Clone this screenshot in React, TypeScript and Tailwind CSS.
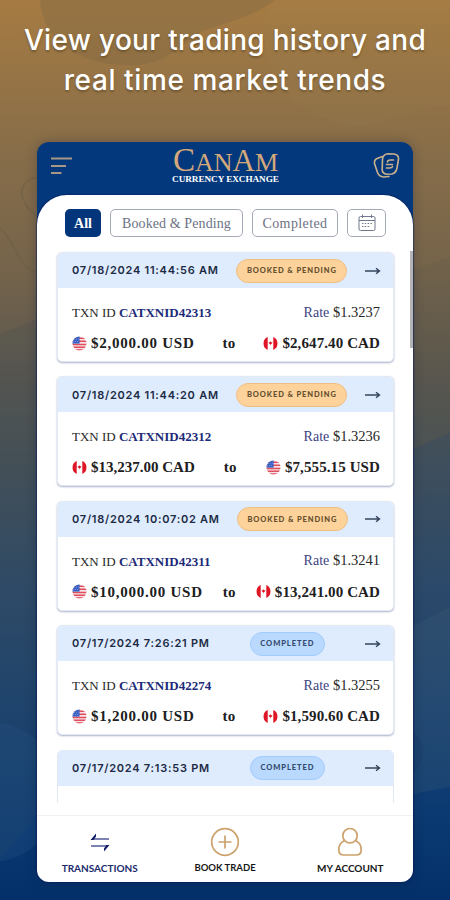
type Currency = "USD" | "CAD";

type Transaction = {
  date: string;
  status: "BOOKED & PENDING" | "COMPLETED";
  id: string;
  rate: string;
  from: string;
  fromCurrency: Currency;
  to: string;
  toCurrency: Currency;
};

const transactions: Transaction[] = [
  { date: "07/18/2024 11:44:56 AM", status: "BOOKED & PENDING", id: "CATXNID42313", rate: "$1.3237", from: "$2,000.00", fromCurrency: "USD", to: "$2,647.40", toCurrency: "CAD" },
  { date: "07/18/2024 11:44:20 AM", status: "BOOKED & PENDING", id: "CATXNID42312", rate: "$1.3236", from: "$13,237.00", fromCurrency: "CAD", to: "$7,555.15", toCurrency: "USD" },
  { date: "07/18/2024 10:07:02 AM", status: "BOOKED & PENDING", id: "CATXNID42311", rate: "$1.3241", from: "$10,000.00", fromCurrency: "USD", to: "$13,241.00", toCurrency: "CAD" },
  { date: "07/17/2024 7:26:21 PM", status: "COMPLETED", id: "CATXNID42274", rate: "$1.3255", from: "$1,200.00", fromCurrency: "USD", to: "$1,590.60", toCurrency: "CAD" },
];

function Flag({ currency }: { currency: Currency }) {
  if (currency === "CAD") {
    return (
      <svg width="15" height="15" viewBox="0 0 15 15" className="shrink-0">
        <circle cx="7.5" cy="7.5" r="7" fill="#fff" />
        <path d="M4.7 1.1a7 7 0 0 0 0 12.8zM10.3 1.1a7 7 0 0 1 0 12.8z" fill="#df1525" />
        <path d="M7.5 5.2l.7 1 1.4.3-.9 1.2-.8.4-.2 1.2h-.4l-.2-1.2-.8-.4-.9-1.2 1.4-.3z" fill="#df1525" />
      </svg>
    );
  }
  return (
    <svg width="15" height="15" viewBox="0 0 15 15" className="shrink-0">
      <clipPath id="round">
        <circle cx="7.5" cy="7.5" r="7" />
      </clipPath>
      <g clipPath="url(#round)">
        <rect width="15" height="15" fill="#f6e2e8" />
        <path d="M0 2.2h15M0 5.3h15M0 8.4h15M0 11.2h15M0 14h15" stroke="#e04f5c" strokeWidth="1.5" />
        <rect width="7.6" height="7.6" fill="#3a62c5" />
        <path d="M2 3.2h5M1 5.5h6" stroke="#8ba5dc" strokeWidth=".7" strokeDasharray="1 1" />
      </g>
    </svg>
  );
}

function Backdrop() {
  return (
    <svg width="450" height="900" viewBox="0 0 450 900" className="absolute inset-0">
      <defs>
        <linearGradient id="sky" x1="0" y1="0" x2="0" y2="1">
          <stop offset="0" stopColor="#a67b42" />
          <stop offset=".16" stopColor="#896e49" />
          <stop offset=".3" stopColor="#75644b" />
          <stop offset=".42" stopColor="#5a5750" />
          <stop offset=".52" stopColor="#465158" />
          <stop offset=".64" stopColor="#314c68" />
          <stop offset=".78" stopColor="#1d4470" />
          <stop offset=".9" stopColor="#0b3a72" />
          <stop offset="1" stopColor="#04306a" />
        </linearGradient>
      </defs>
      <rect width="450" height="900" fill="url(#sky)" />
      <path d="M40 0h235c-20 16-48 22-70 30-20 9-38 38-78 35C80 66 42 40 40 0z" fill="#806a43" fillOpacity=".4" />
      <path d="M270 0c-22 66 18 118 90 127 28-5 60-22 90-22V0z" fill="#a08454" fillOpacity=".12" />
      <path d="M38 177c-15 2-20 15-13 26 4 8 8 10 12 13M0 228c14 12 20 43 37 44" fill="none" stroke="#635a46" strokeOpacity=".3" strokeWidth="2" />
      <path d="M0 334l100-40v446L0 860z" fill="#334a58" fillOpacity=".14" />
      <path d="M413 270l37-13v176l-37 16z" fill="#565548" fillOpacity=".13" />
      <path d="M413 449l37-16v174l-37 19z" fill="#1d4570" fillOpacity=".18" />
      <path d="M413 626l37-19v180l-37 7z" fill="#3c5a79" fillOpacity=".25" />
      <circle cx="-10" cy="792" r="70" fill="#2d5986" fillOpacity=".25" />
      <circle cx="396" cy="752" r="27" fill="#173b66" fillOpacity=".4" />
    </svg>
  );
}

function AppHeader() {
  return (
    <div className="flex h-[53px] items-start justify-between pr-[13px] pl-[14px]">
      <svg width="22" height="20" viewBox="0 0 22 20" className="mt-[14px]" stroke="#a99786" strokeWidth="2">
        <path d="M0 2.5h21M0 10h15M0 17h10.5" />
      </svg>
      <div className="mt-[7px] ml-[5px] flex flex-col items-center whitespace-nowrap">
        <div className="h-[26px] text-[26px] leading-[22px] text-[#d3a87b]">
          <span className="text-[33px] leading-[22px]">C</span>AN<span className="text-[31px] leading-[22px]">A</span>M
        </div>
        <div className="text-[9.2px] leading-[8px] font-bold tracking-[-0.05px] text-white">CURRENCY EXCHANGE</div>
      </div>
      <svg width="27" height="27" viewBox="0 0 27 27" className="mt-[10px]" fill="none" stroke="#cbb08d" strokeWidth="1.6" strokeLinecap="round" strokeLinejoin="round">
        <path d="M11 3.5Q12 2 15 1.8l6 .2Q26 3 25.5 7l-1.500 9q-1 5-5 6l-5 .3q-5-.6-4.800-5L9.500 7q.2-2 1.500-3.500z" />
        <path d="M9.500 4.500L4 6.500Q1 8 1.500 11.500l3 9q1.500 4 6 4.500l5.500-.5" />
        <path d="M14.500 10q0-2 3-2h3M13.500 12.500h6M13.500 16h3q2.500 0 3-1.500" />
      </svg>
    </div>
  );
}

function Filters() {
  const base = "flex h-7 items-center justify-center rounded-[5px] border border-[#a5aab8] text-[14px] whitespace-nowrap text-[#6d7285]";
  return (
    <div className="flex gap-[9px] pt-[14px] pl-[28px]">
      <button className="h-7 w-9 rounded-[5px] bg-[#03357a] text-[14px] font-bold text-white">All</button>
      <button className={`${base} w-[133px] tracking-[0.1px]`}>Booked &amp; Pending</button>
      <button className={`${base} w-[86px] tracking-[0.4px]`}>Completed</button>
      <button className={`${base} w-[39px]`}>
        <svg width="18" height="18" viewBox="0 0 18 18" fill="none" stroke="#70798b">
          <rect x="1" y="2.5" width="16" height="14" rx="1.5" />
          <path d="M1 6.5h16M4.5.5v3.5M13.5.5v3.5" />
          <path d="M4 9.5h10M4 12.5h8" strokeDasharray="1.5 1.3" />
        </svg>
      </button>
    </div>
  );
}

function StatusBadge({ status }: { status: Transaction["status"] }) {
  if (status === "COMPLETED") {
    return (
      <span className="flex h-6 w-[75px] items-center justify-center rounded-full border border-[#a2cbfb] bg-[#b9d9ff] font-['Lato'] text-[7.5px] font-black tracking-[0.95px] text-[#33496d]">
        {status}
      </span>
    );
  }
  return (
    <span className="flex h-6 w-[111px] items-center justify-center rounded-full border border-[#eebf83] bg-[#fdd29b] font-['Lato'] text-[7.5px] font-black tracking-[0.9px] text-[#65502f]">
      {status}
    </span>
  );
}

function CardHeader({ date, status }: { date: string; status: Transaction["status"] }) {
  return (
    <div className="flex h-[35px] items-center bg-[#dfecfe] pr-[12px] pl-[14px]">
      <span className="font-['Inter'] text-[11px] font-semibold tracking-[0.75px] whitespace-nowrap text-[#202a44]">{date}</span>
      <div className="flex flex-1 justify-center">
        <StatusBadge status={status} />
      </div>
      <svg width="16" height="10" viewBox="0 0 16 10" fill="none" stroke="#34455c" strokeWidth="1.4">
        <path d="M0 5h14.5M11 2.2L14.5 5 11 7.8" />
      </svg>
    </div>
  );
}

function TransactionCard({ txn }: { txn: Transaction }) {
  return (
    <div className="h-[110px] shrink-0 overflow-hidden rounded-[5px] border border-[#e2e9f5] bg-white shadow-[0_1px_2px_#a9b2c8]">
      <CardHeader date={txn.date} status={txn.status} />
      <div className="flex h-[49px] items-center justify-between pr-[13px] pl-[14px] whitespace-nowrap text-[#282828]">
        <span className="text-[13px]">
          TXN ID <b className="text-[#202b78]">{txn.id}</b>
        </span>
        <span className="text-[14.5px]">
          <span className="text-[14px] text-[#3b4383]">Rate</span> {txn.rate}
        </span>
      </div>
      <div className="flex h-3 items-center justify-between pr-[13px] pl-[14px] text-[15px] font-bold whitespace-nowrap text-[#202020]">
        <span className={`flex items-center gap-1 ${txn.fromCurrency === "USD" ? "tracking-[0.75px]" : ""}`}>
          <Flag currency={txn.fromCurrency} />
          {txn.from} {txn.fromCurrency}
        </span>
        <span className="tracking-[0.3px]">to</span>
        <span className="flex items-center gap-1 tracking-[0.1px]">
          <Flag currency={txn.toCurrency} />
          {txn.to} {txn.toCurrency}
        </span>
      </div>
    </div>
  );
}

function BottomNav() {
  const item = "flex flex-col items-center gap-[4px] pt-[11px] font-['Lato'] leading-[14px] font-bold";
  return (
    <nav className="grid h-[67px] grid-cols-3 border-t border-[#f0f1f4]">
      <div className={`${item} text-[10px] text-[#202b6b]`}>
        <svg width="30" height="30" viewBox="0 0 30 30" fill="none">
          <path d="M7 12h17M6 19h17" stroke="#7c83b0" strokeWidth="2.2" />
          <path d="M5.5 13L11 6.500V9.500L8.500 13zM24.500 18L19 24.500V21.500L21.500 18z" fill="#101c66" />
        </svg>
        <span>TRANSACTIONS</span>
      </div>
      <div className={`${item} text-[9.5px] text-[#171717]`}>
        <svg width="30" height="30" viewBox="0 0 30 30" fill="none" stroke="#cda26c" strokeWidth="1.7">
          <circle cx="15" cy="15" r="13.3" />
          <path d="M15 8.5v13M8.5 15h13" />
        </svg>
        <span>BOOK TRADE</span>
      </div>
      <div className={`${item} text-[10px] text-[#171717]`}>
        <svg width="30" height="30" viewBox="0 0 30 30" fill="none" stroke="#cda26c" strokeWidth="1.7">
          <circle cx="15" cy="8.7" r="7.2" />
          <path d="M9.5 13.5Q3.8 16 3.8 23q0 5 5 5h12.400q5 0 5-5 0-7-5.700-9.500" />
        </svg>
        <span>MY ACCOUNT</span>
      </div>
    </nav>
  );
}

export default function App() {
  return (
    <div className="relative h-[900px] w-[450px] overflow-hidden font-['Liberation_Serif',serif]">
      <Backdrop />
      <div className="relative">
        <h1 className="pt-5 text-center font-['Inter'] text-[28px] leading-10 font-medium tracking-[0.3px] whitespace-nowrap text-white [text-shadow:0_2px_2px_#5b431f90]">
          View your trading history and
          <br />
          <span className="tracking-[0.6px]">real time market trends</span>
        </h1>
        <div className="mx-auto mt-[42px] h-[740px] w-[376px] rounded-xl bg-[#03397c] shadow-[0_0_12px_#00102a40]">
          <AppHeader />
          <div className="flex h-[687px] flex-col rounded-t-[30px] rounded-b-xl bg-white shadow-[0_0_1px_1px_#0a1a5c90]">
            <Filters />
            <div className="mt-[14px] flex h-[552px] justify-between overflow-hidden pl-[20px]">
              <div className="mt-px flex w-[337px] flex-col gap-[14.4px]">
                {transactions.map((txn) => (
                  <TransactionCard key={txn.id} txn={txn} />
                ))}
                <div className="h-[110px] shrink-0 overflow-hidden rounded-[5px] border border-[#e2e9f5]">
                  <CardHeader date="07/17/2024 7:13:53 PM" status="COMPLETED" />
                </div>
              </div>
              <div className="h-[97px] w-[3px] bg-[#b4b4b6]" />
            </div>
            <div className="flex-1" />
            <BottomNav />
          </div>
        </div>
      </div>
    </div>
  );
}
